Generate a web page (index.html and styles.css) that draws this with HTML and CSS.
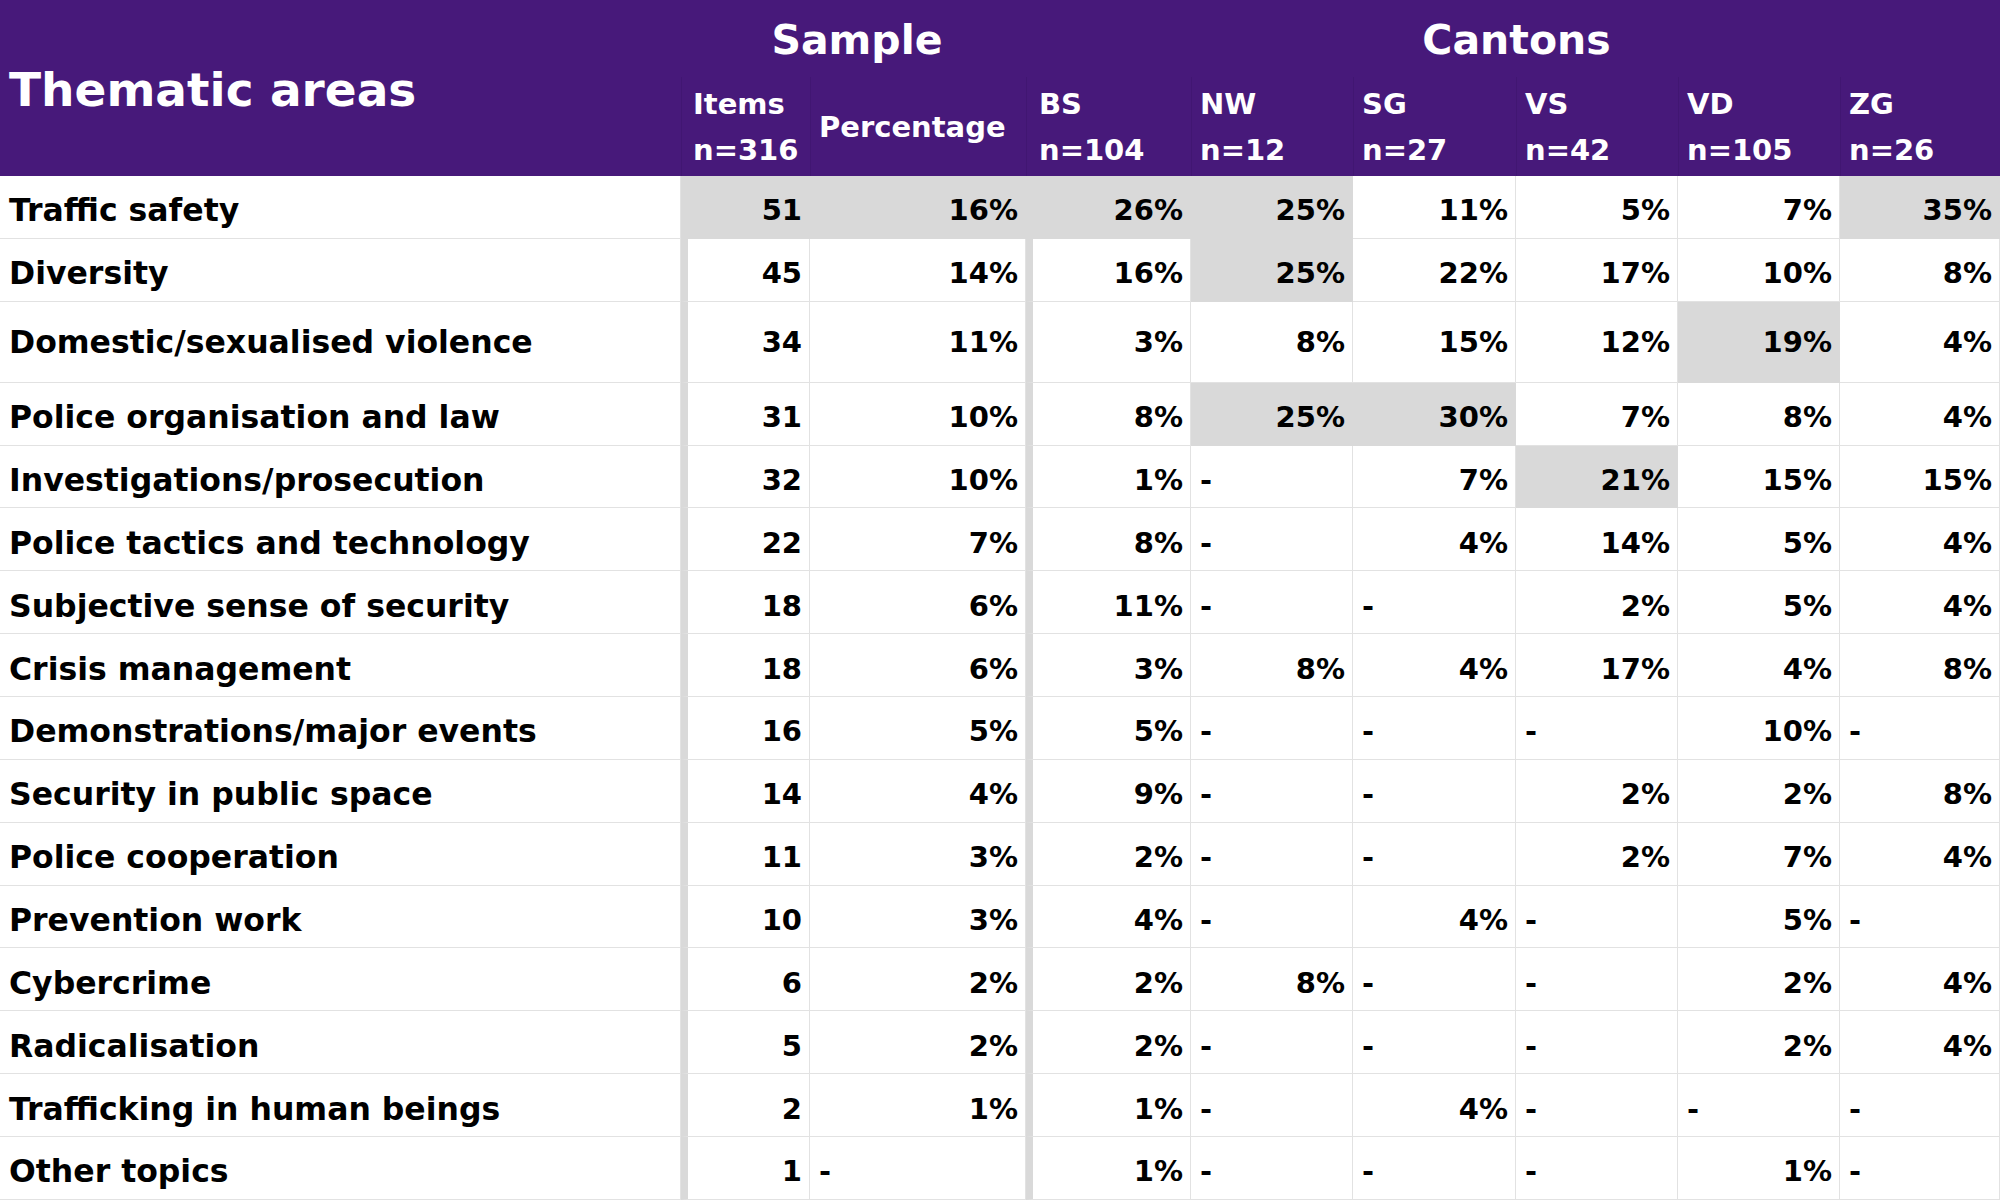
FILE: index.html
```html
<!DOCTYPE html>
<html lang="en">
<head>
<meta charset="utf-8">
<title>Thematic areas</title>
<link rel="stylesheet" href="styles.css">
</head>
<body>
<div class="sheet">
  <div class="head">
    <div class="h-title">Thematic areas</div>
    <div class="h-group h-sample">Sample</div>
    <div class="h-group h-cantons">Cantons</div>
    <div class="h-sub h-items">Items<br>n=316</div>
    <div class="h-sub h-pct">Percentage</div>
    <div class="h-sub h-bs">BS<br>n=104</div>
    <div class="h-sub">NW<br>n=12</div>
    <div class="h-sub">SG<br>n=27</div>
    <div class="h-sub">VS<br>n=42</div>
    <div class="h-sub">VD<br>n=105</div>
    <div class="h-sub">ZG<br>n=26</div>
  </div>

  <div class="row">
    <div class="c label">Traffic safety</div>
    <div class="c items hl">51</div>
    <div class="c hl">16%</div>
    <div class="c bs hl">26%</div>
    <div class="c hl">25%</div>
    <div class="c">11%</div>
    <div class="c">5%</div>
    <div class="c">7%</div>
    <div class="c hl">35%</div>
  </div>
  <div class="row">
    <div class="c label">Diversity</div>
    <div class="c items">45</div>
    <div class="c">14%</div>
    <div class="c bs">16%</div>
    <div class="c hl">25%</div>
    <div class="c">22%</div>
    <div class="c">17%</div>
    <div class="c">10%</div>
    <div class="c">8%</div>
  </div>
  <div class="row tall">
    <div class="c label">Domestic/sexualised violence</div>
    <div class="c items">34</div>
    <div class="c">11%</div>
    <div class="c bs">3%</div>
    <div class="c">8%</div>
    <div class="c">15%</div>
    <div class="c">12%</div>
    <div class="c hl">19%</div>
    <div class="c">4%</div>
  </div>
  <div class="row">
    <div class="c label">Police organisation and law</div>
    <div class="c items">31</div>
    <div class="c">10%</div>
    <div class="c bs">8%</div>
    <div class="c hl">25%</div>
    <div class="c hl">30%</div>
    <div class="c">7%</div>
    <div class="c">8%</div>
    <div class="c">4%</div>
  </div>
  <div class="row">
    <div class="c label">Investigations/prosecution</div>
    <div class="c items">32</div>
    <div class="c">10%</div>
    <div class="c bs">1%</div>
    <div class="c dash">-</div>
    <div class="c">7%</div>
    <div class="c hl">21%</div>
    <div class="c">15%</div>
    <div class="c">15%</div>
  </div>
  <div class="row">
    <div class="c label">Police tactics and technology</div>
    <div class="c items">22</div>
    <div class="c">7%</div>
    <div class="c bs">8%</div>
    <div class="c dash">-</div>
    <div class="c">4%</div>
    <div class="c">14%</div>
    <div class="c">5%</div>
    <div class="c">4%</div>
  </div>
  <div class="row">
    <div class="c label">Subjective sense of security</div>
    <div class="c items">18</div>
    <div class="c">6%</div>
    <div class="c bs">11%</div>
    <div class="c dash">-</div>
    <div class="c dash">-</div>
    <div class="c">2%</div>
    <div class="c">5%</div>
    <div class="c">4%</div>
  </div>
  <div class="row">
    <div class="c label">Crisis management</div>
    <div class="c items">18</div>
    <div class="c">6%</div>
    <div class="c bs">3%</div>
    <div class="c">8%</div>
    <div class="c">4%</div>
    <div class="c">17%</div>
    <div class="c">4%</div>
    <div class="c">8%</div>
  </div>
  <div class="row">
    <div class="c label">Demonstrations/major events</div>
    <div class="c items">16</div>
    <div class="c">5%</div>
    <div class="c bs">5%</div>
    <div class="c dash">-</div>
    <div class="c dash">-</div>
    <div class="c dash">-</div>
    <div class="c">10%</div>
    <div class="c dash">-</div>
  </div>
  <div class="row">
    <div class="c label">Security in public space</div>
    <div class="c items">14</div>
    <div class="c">4%</div>
    <div class="c bs">9%</div>
    <div class="c dash">-</div>
    <div class="c dash">-</div>
    <div class="c">2%</div>
    <div class="c">2%</div>
    <div class="c">8%</div>
  </div>
  <div class="row">
    <div class="c label">Police cooperation</div>
    <div class="c items">11</div>
    <div class="c">3%</div>
    <div class="c bs">2%</div>
    <div class="c dash">-</div>
    <div class="c dash">-</div>
    <div class="c">2%</div>
    <div class="c">7%</div>
    <div class="c">4%</div>
  </div>
  <div class="row">
    <div class="c label">Prevention work</div>
    <div class="c items">10</div>
    <div class="c">3%</div>
    <div class="c bs">4%</div>
    <div class="c dash">-</div>
    <div class="c">4%</div>
    <div class="c dash">-</div>
    <div class="c">5%</div>
    <div class="c dash">-</div>
  </div>
  <div class="row">
    <div class="c label">Cybercrime</div>
    <div class="c items">6</div>
    <div class="c">2%</div>
    <div class="c bs">2%</div>
    <div class="c">8%</div>
    <div class="c dash">-</div>
    <div class="c dash">-</div>
    <div class="c">2%</div>
    <div class="c">4%</div>
  </div>
  <div class="row">
    <div class="c label">Radicalisation</div>
    <div class="c items">5</div>
    <div class="c">2%</div>
    <div class="c bs">2%</div>
    <div class="c dash">-</div>
    <div class="c dash">-</div>
    <div class="c dash">-</div>
    <div class="c">2%</div>
    <div class="c">4%</div>
  </div>
  <div class="row">
    <div class="c label">Trafficking in human beings</div>
    <div class="c items">2</div>
    <div class="c">1%</div>
    <div class="c bs">1%</div>
    <div class="c dash">-</div>
    <div class="c">4%</div>
    <div class="c dash">-</div>
    <div class="c dash">-</div>
    <div class="c dash">-</div>
  </div>
  <div class="row">
    <div class="c label">Other topics</div>
    <div class="c items">1</div>
    <div class="c dash">-</div>
    <div class="c bs">1%</div>
    <div class="c dash">-</div>
    <div class="c dash">-</div>
    <div class="c dash">-</div>
    <div class="c">1%</div>
    <div class="c dash">-</div>
  </div>
</div>
</body>
</html>
```
FILE: styles.css
```css
html, body {
  margin: 0;
  padding: 0;
  background: #ffffff;
}

body {
  font-family: "DejaVu Sans", "Open Sans", "Liberation Sans", sans-serif;
  color: #000000;
}

.sheet {
  width: 2000px;
}

.head,
.row {
  display: grid;
  grid-template-columns: 681px 129px 216px 165px 162px 163px 162px 162px 160px;
}

.head {
  grid-template-rows: 77px 99px;
  background: #47197a;
  color: #ffffff;
  font-weight: 700;
}

.h-title {
  grid-row: 1 / span 2;
  grid-column: 1;
  display: flex;
  align-items: center;
  padding-left: 9px;
  padding-top: 2px;
  font-size: 47px;
}

.h-group {
  grid-row: 1;
  display: flex;
  align-items: center;
  justify-content: center;
  font-size: 41px;
  padding-left: 7px;
  padding-top: 2px;
}

.h-sample {
  grid-column: 2 / span 2;
}

.h-cantons {
  grid-column: 4 / span 6;
}

.h-sub {
  grid-row: 2;
  display: flex;
  flex-direction: column;
  justify-content: center;
  padding-left: 8px;
  font-size: 29px;
  line-height: 46px;
  border-left: 1px solid #411672;
}

.h-items {
  padding-left: 11px;
}

.h-bs {
  padding-left: 12px;
}

.row {
  height: 62.87px;
}

.row.tall {
  height: 81px;
}

.c {
  box-sizing: border-box;
  display: flex;
  align-items: center;
  justify-content: flex-end;
  padding: 7px 7px 0 7px;
  font-size: 29px;
  font-weight: 700;
  border-right: 1px solid #e2e2e2;
  border-bottom: 1px solid #e2e2e2;
  white-space: nowrap;
}

.row.tall .c {
  padding-top: 0;
}

.c.label {
  justify-content: flex-start;
  padding-left: 9px;
  font-size: 31.5px;
}

.c.items,
.c.bs {
  border-left: 7px solid #d9d9d9;
}

.c.dash {
  justify-content: flex-start;
  padding-left: 9px;
}

.c.hl {
  background: #d9d9d9;
  border-right-color: #d9d9d9;
  border-bottom-color: #d9d9d9;
}
```
